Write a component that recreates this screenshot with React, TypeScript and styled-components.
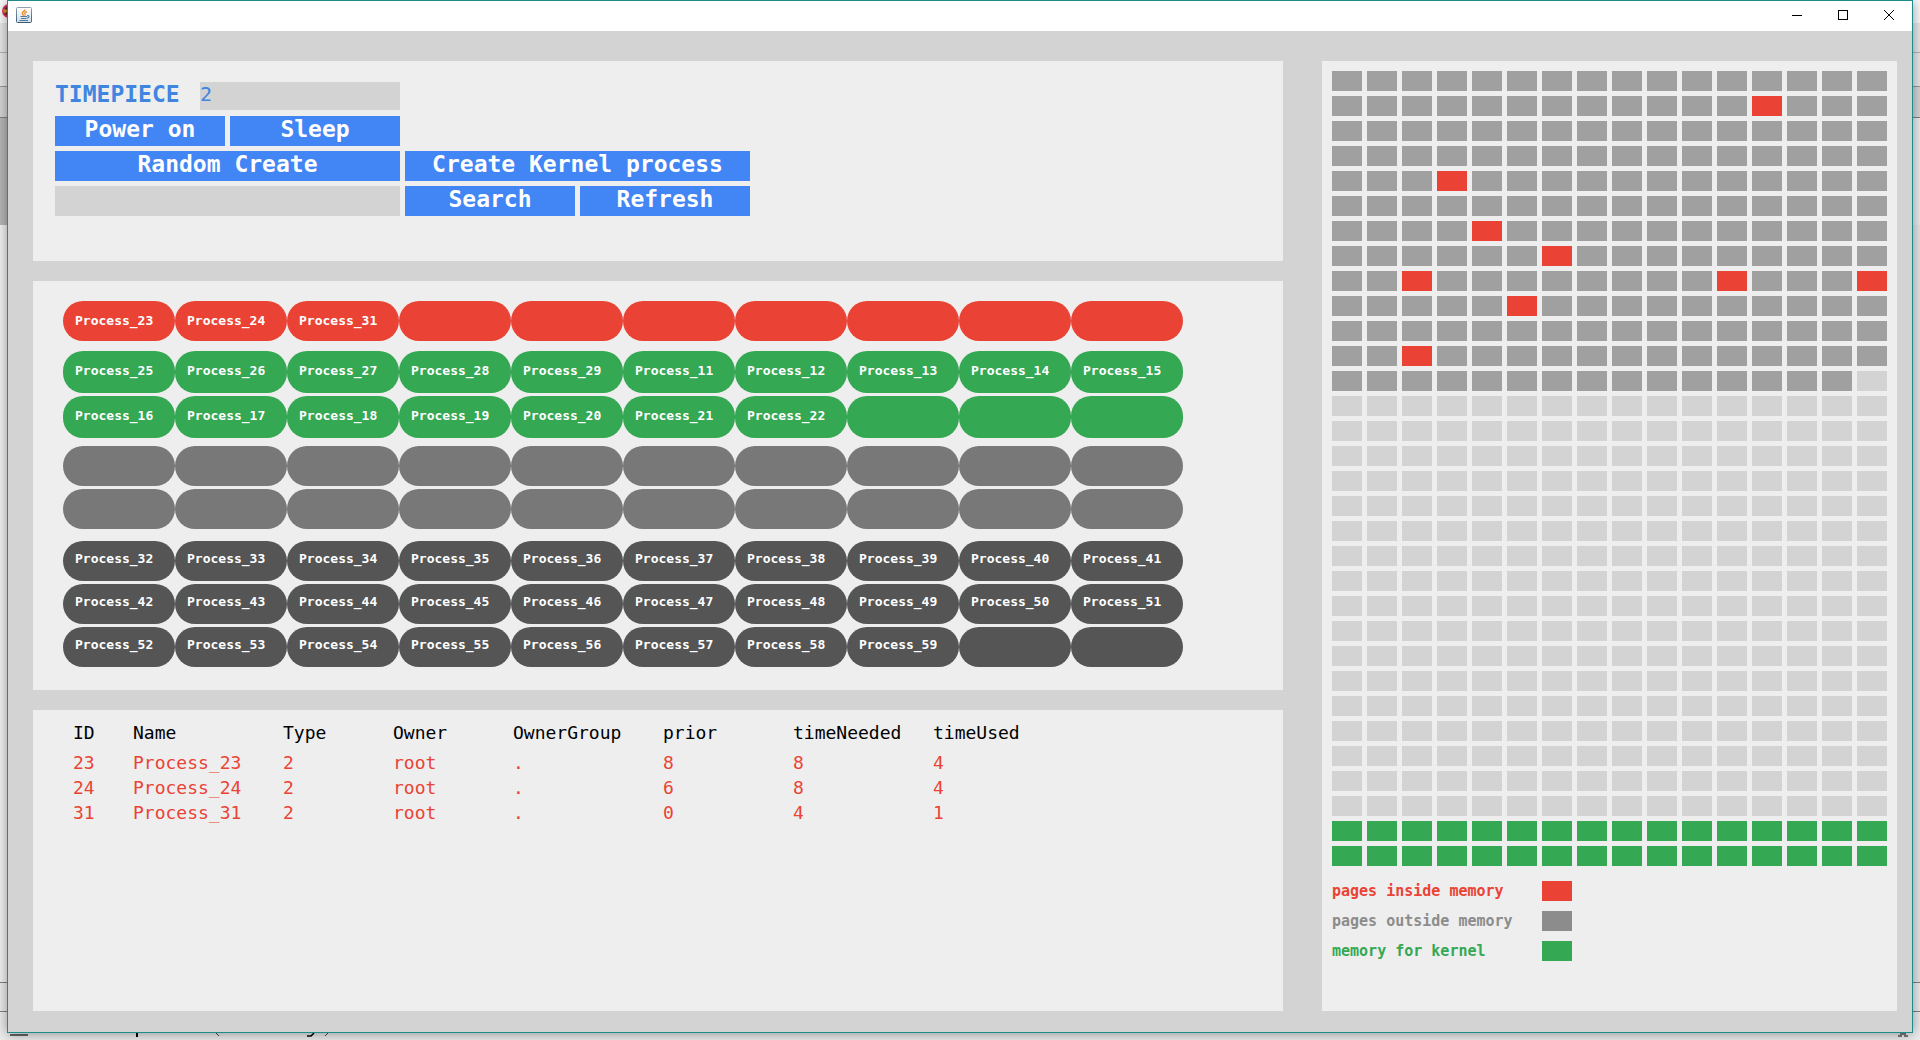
import React, { useState } from "react";
import styled, { createGlobalStyle } from "styled-components";

const color = {
  red: "#ea4335",
  green: "#34a853",
  blue: "#4285f4",
  ink: "#4085e0",
  panel: "#eeeeee",
  frame: "#d3d3d3",
  page: "#a0a0a0",
  legendGrey: "#8c8c8c",
  waiting: "#787878",
  stored: "#555555",
  border: "#1f8c8c",
};

const mono = '"DejaVu Sans Mono", "Liberation Mono", monospace';

const GlobalStyle = createGlobalStyle`
  *, *::before, *::after { box-sizing: border-box; }
  body { margin: 0; background: #ececec; font-family: ${mono}; }
`;

const Desktop = styled.div`
  position: relative;
  min-height: 100vh;
  padding: 0 7px 7px;
  overflow: hidden;
`;

/* The editor window that shows round the edges of the main one */
const Backdrop = styled.div`
  position: absolute;
  inset: 0;
  display: flex;
  flex-direction: column;
  background: #ececec;
`;

const Strip = styled.div<{ $height: number; $fill: string; $line?: string }>`
  flex: none;
  height: ${(p) => p.$height}px;
  background: ${(p) => p.$fill};
  border-bottom: ${(p) => (p.$line ? `1px solid ${p.$line}` : "none")};
`;

const SideBar = styled.div`
  flex: none;
  width: 7px;
  height: 107px;
  background: #b8b8b8;
`;

const Spacer = styled.div`
  flex: 1;
  background: linear-gradient(to right, #f2f2f2 50%, #e6e6e6 50%);
`;

const StatusLine = styled.div`
  flex: none;
  display: flex;
  justify-content: space-between;
  align-items: flex-end;
  height: 28px;
  background: #ececec;
`;

const Window = styled.main`
  position: relative;
  display: flex;
  flex-direction: column;
  min-height: calc(100vh - 7px);
  border: 1px solid ${color.border};
  background: ${color.frame};
  box-shadow: 0 1px 12px rgba(0, 0, 0, 0.4);
`;

const TitleBar = styled.header`
  display: flex;
  align-items: center;
  justify-content: space-between;
  height: 30px;
  padding: 0 0 2px 8px;
  background: #ffffff;
`;

const WindowButtons = styled.div`
  display: flex;
`;

const WindowButton = styled.button`
  display: grid;
  place-items: center;
  width: 46px;
  height: 28px;
  padding: 0;
  border: 0;
  background: transparent;
`;

const Body = styled.div`
  flex: 1;
  display: grid;
  grid-template-columns: minmax(0, 1fr) 575px;
  gap: 39px;
  padding: 30px 15px 21px 25px;
`;

const Column = styled.div`
  display: flex;
  flex-direction: column;
  gap: 20px;
`;

const Panel = styled.section`
  background: ${color.panel};
`;

const ControlPanel = styled(Panel)`
  display: grid;
  grid-template-columns: repeat(4, 170px);
  grid-auto-rows: 30px;
  gap: 5px;
  padding: 20px 22px 45px;
`;

const TimeRow = styled.div`
  grid-column: 1 / 5;
  display: flex;
  align-items: center;
`;

const TimeLabel = styled.label`
  width: 145px;
  font-size: 23px;
  font-weight: bold;
  line-height: 26px;
  padding-bottom: 4px;
  color: ${color.ink};
`;

const Field = styled.input`
  min-width: 0;
  height: 30px;
  padding: 0;
  border: 0;
  border-radius: 0;
  outline: 0;
  background: ${color.frame};
  color: ${color.ink};
  font: 20px/26px ${mono};
`;

const TimeField = styled(Field)`
  width: 200px;
  height: 28px;
  padding-bottom: 4px;
`;

const SearchField = styled(Field)`
  grid-column: 1 / 3;
`;

const Action = styled.button<{ $columns?: string }>`
  grid-column: ${(p) => p.$columns ?? "auto"};
  padding: 0 0 4px;
  border: 0;
  background: ${color.blue};
  color: #ffffff;
  font: bold 23px/26px ${mono};
  white-space: nowrap;
`;

const ProcessPanel = styled(Panel)`
  padding: 20px 30px 23px;
`;

const PillGroup = styled.ul<{ $rowHeight: number; $textHeight: number; $space: number }>`
  display: grid;
  grid-template-columns: repeat(10, 112px);
  grid-auto-rows: ${(p) => p.$rowHeight}px;
  row-gap: 3px;
  margin: 0 0 ${(p) => p.$space}px;
  padding: 0;
  list-style: none;
  line-height: ${(p) => p.$textHeight}px;
`;

const Pill = styled.li<{ $fill: string }>`
  padding-left: 12px;
  border-radius: 20px;
  background: ${(p) => p.$fill};
  color: #ffffff;
  font-size: 13px;
  font-weight: bold;
`;

const TablePanel = styled(Panel)`
  flex: 1;
  padding: 10px 40px;
`;

const Table = styled.table`
  table-layout: fixed;
  width: 1000px;
  border-collapse: collapse;
  font-size: 18px;
  line-height: 25px;
  text-align: left;
`;

const HeadCell = styled.th<{ $width: number }>`
  width: ${(p) => p.$width}px;
  height: 30px;
  padding: 0;
  vertical-align: top;
  font-weight: normal;
  color: #000000;
`;

const Cell = styled.td`
  height: 25px;
  padding: 0;
  color: ${color.red};
`;

const MemoryPanel = styled(Panel)`
  padding: 10px 10px 50px;
`;

const MemoryGrid = styled.div`
  display: grid;
  grid-template-columns: repeat(16, 30px);
  grid-auto-rows: 20px;
  gap: 5px;
`;

const Block = styled.span<{ $fill: string }>`
  width: 30px;
  height: 20px;
  background: ${(p) => p.$fill};
`;

const Legend = styled.ul`
  display: flex;
  flex-direction: column;
  gap: 10px;
  margin: 15px 0 0;
  padding: 0;
  list-style: none;
`;

const LegendItem = styled.li<{ $ink: string }>`
  display: grid;
  grid-template-columns: 210px 30px;
  color: ${(p) => p.$ink};
  font-size: 15px;
  font-weight: bold;
  line-height: 20px;
`;

const JavaIcon = () => (
  <svg width="16" height="16" viewBox="0 0 16 16" aria-hidden="true">
    <defs>
      <linearGradient id="tile" x1="0" y1="0" x2="0" y2="1">
        <stop offset="0" stopColor="#ffffff" />
        <stop offset="1" stopColor="#d2dde6" />
      </linearGradient>
      <linearGradient id="rim" x1="0" y1="0" x2="0" y2="1">
        <stop offset="0" stopColor="#8fa1af" />
        <stop offset="1" stopColor="#3b5a72" />
      </linearGradient>
    </defs>
    <rect x="0.5" y="0.5" width="15" height="15" rx="1" fill="url(#tile)" stroke="url(#rim)" />
    <path d="M9 2.500C9.200 4 6 4.800 6.300 6.400C6.500 7.300 7.300 7.700 7.500 8.600" fill="none" stroke="#e8871e" strokeWidth="1.300" />
    <path d="M11 4.600C9 5.200 8.200 6 9 6.900C9.400 7.400 9.200 7.900 8.600 8.600" fill="none" stroke="#e8871e" strokeWidth="1.100" />
    <path d="M4.500 9.500h6.500M5 11.500h5.500M3.500 13.500h8.500" stroke="#4f7c9e" strokeWidth="1.100" fill="none" />
    <path d="M11 8.700c2.700-.6 2.800 2-.2 2.600" stroke="#4f7c9e" strokeWidth="1.100" fill="none" />
  </svg>
);

type Group = {
  name: string;
  fill: string;
  rowHeight: number;
  textHeight: number;
  space: number;
  slots: number;
  ids: number[];
};

const range = (from: number, to: number) => Array.from({ length: to - from + 1 }, (_, i) => from + i);

const groups: Group[] = [
  { name: "Running", fill: color.red, rowHeight: 40, textHeight: 40, space: 10, slots: 10, ids: [23, 24, 31] },
  { name: "Ready", fill: color.green, rowHeight: 42, textHeight: 40, space: 8, slots: 20, ids: [...range(25, 29), ...range(11, 22)] },
  { name: "Waiting", fill: color.waiting, rowHeight: 40, textHeight: 40, space: 12, slots: 20, ids: [] },
  { name: "Stored", fill: color.stored, rowHeight: 40, textHeight: 36, space: 0, slots: 30, ids: range(32, 59) },
];

const columns: [string, number][] = [
  ["ID", 60],
  ["Name", 150],
  ["Type", 110],
  ["Owner", 120],
  ["OwnerGroup", 150],
  ["prior", 130],
  ["timeNeeded", 140],
  ["timeUsed", 140],
];

const rows = [
  ["23", "Process_23", "2", "root", ".", "8", "8", "4"],
  ["24", "Process_24", "2", "root", ".", "6", "8", "4"],
  ["31", "Process_31", "2", "root", ".", "0", "4", "1"],
];

const COLS = 16;
const USED_BLOCKS = 12 * COLS + 15;
const KERNEL_START = 30 * COLS;
const inMemory = new Set(
  [[1, 12], [4, 3], [6, 4], [7, 6], [8, 2], [8, 11], [8, 15], [9, 5], [11, 2]].map(([r, c]) => r * COLS + c)
);

const blockFill = (i: number) => {
  if (i >= KERNEL_START) return color.green;
  if (inMemory.has(i)) return color.red;
  return i < USED_BLOCKS ? color.page : color.frame;
};

const legend: [string, string][] = [
  ["pages inside memory", color.red],
  ["pages outside memory", color.legendGrey],
  ["memory for kernel", color.green],
];

export default function App() {
  const [query, setQuery] = useState("");

  return (
    <Desktop>
      <GlobalStyle />
      <Backdrop aria-hidden="true">
        <Strip $height={23} $fill="#fafafa">
          <svg width="16" height="23">
            <circle cx="9" cy="11" r="6" fill="#4a2b2b" stroke="#e0305e" strokeWidth="2" />
            <circle cx="5" cy="11" r="2" fill="#d98a2b" />
          </svg>
        </Strip>
        <Strip $height={30} $fill="#e8e8e8" $line="#b4b4b4" />
        <Strip $height={34} $fill="#e8e8e8" $line="#989898" />
        <Strip $height={31} $fill="#d6d6d6" $line="#808080" />
        <SideBar />
        <Spacer />
        <Strip $height={1} $fill="#808080" />
        <Strip $height={29} $fill="#ececec" $line="#808080" />
        <StatusLine>
          <svg width="340" height="7">
            <path d="M10 1.500h18M10 2.500h18" stroke="#666" />
            <path d="M136 0h2v4h-2z" />
            <path d="M216 0l3 3M325 3l3-3" stroke="#444" fill="none" />
            <path d="M307 3h4l3-3" stroke="#000" strokeWidth="1.500" fill="none" />
          </svg>
          <svg width="24" height="7">
            <path d="M2 3h4M8 3h4M4 1h6" stroke="#555" strokeWidth="1.500" />
          </svg>
        </StatusLine>
      </Backdrop>

      <Window>
        <TitleBar>
          <JavaIcon />
          <WindowButtons>
            <WindowButton aria-label="Minimize">
              <svg width="10" height="10"><path d="M0 5.500h10" stroke="#000" /></svg>
            </WindowButton>
            <WindowButton aria-label="Maximize">
              <svg width="10" height="10"><rect x="0.5" y="0.5" width="9" height="9" fill="none" stroke="#000" /></svg>
            </WindowButton>
            <WindowButton aria-label="Close">
              <svg width="10" height="10"><path d="M0 0l10 10M10 0L0 10" stroke="#000" /></svg>
            </WindowButton>
          </WindowButtons>
        </TitleBar>

        <Body>
          <Column>
            <ControlPanel>
              <TimeRow>
                <TimeLabel htmlFor="timepiece">TIMEPIECE</TimeLabel>
                <TimeField id="timepiece" value="2" readOnly />
              </TimeRow>
              <Action>Power on</Action>
              <Action>Sleep</Action>
              <Action $columns="1 / 3">Random Create</Action>
              <Action $columns="3 / 5">Create Kernel process</Action>
              <SearchField aria-label="Search" value={query} onChange={(e) => setQuery(e.target.value)} />
              <Action>Search</Action>
              <Action>Refresh</Action>
            </ControlPanel>

            <ProcessPanel>
              {groups.map((g) => (
                <PillGroup
                  key={g.name}
                  aria-label={g.name}
                  $rowHeight={g.rowHeight}
                  $textHeight={g.textHeight}
                  $space={g.space}
                >
                  {range(0, g.slots - 1).map((i) => (
                    <Pill key={i} $fill={g.fill}>{g.ids[i] ? `Process_${g.ids[i]}` : null}</Pill>
                  ))}
                </PillGroup>
              ))}
            </ProcessPanel>

            <TablePanel>
              <Table>
                <thead>
                  <tr>{columns.map(([name, width]) => <HeadCell key={name} $width={width} scope="col">{name}</HeadCell>)}</tr>
                </thead>
                <tbody>
                  {rows.map((row) => (
                    <tr key={row[0]}>{row.map((value, i) => <Cell key={columns[i][0]}>{value}</Cell>)}</tr>
                  ))}
                </tbody>
              </Table>
            </TablePanel>
          </Column>

          <MemoryPanel>
            <MemoryGrid role="img" aria-label="Memory map">
              {range(0, 32 * COLS - 1).map((i) => <Block key={i} $fill={blockFill(i)} />)}
            </MemoryGrid>
            <Legend>
              {legend.map(([text, ink]) => (
                <LegendItem key={text} $ink={ink}>
                  {text}
                  <Block $fill={ink} />
                </LegendItem>
              ))}
            </Legend>
          </MemoryPanel>
        </Body>
      </Window>
    </Desktop>
  );
}
